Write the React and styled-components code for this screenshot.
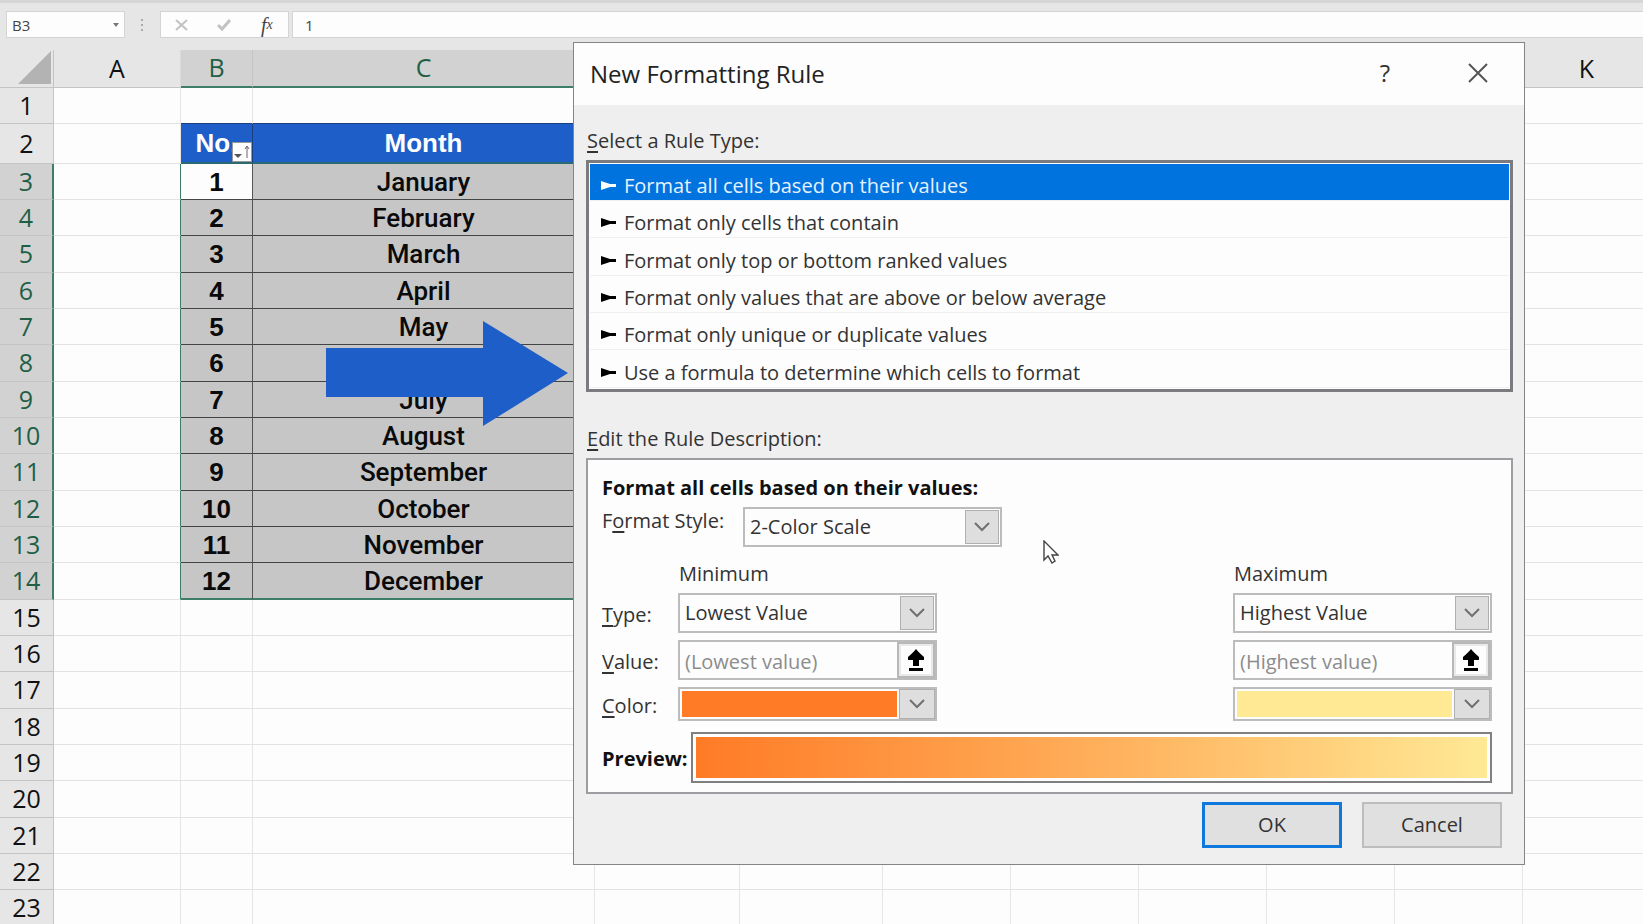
import React, { useState } from 'react'
import styled, { createGlobalStyle, css } from 'styled-components'

// D to J sit behind the dialog, so their letters are left out
const columns = [
  { name: 'A', width: 127 },
  { name: 'B', width: 72 },
  { name: 'C', width: 342 },
  { name: 'D', width: 145, covered: true },
  { name: 'E', width: 143, covered: true },
  { name: 'F', width: 128, covered: true },
  { name: 'G', width: 128, covered: true },
  { name: 'H', width: 128, covered: true },
  { name: 'I', width: 128, covered: true },
  { name: 'J', width: 128, covered: true },
  { name: 'K', width: 128 },
]

const months = [
  'January', 'February', 'March', 'April', 'May', 'June',
  'July', 'August', 'September', 'October', 'November', 'December',
]

const rules = [
  'Format all cells based on their values',
  'Format only cells that contain',
  'Format only top or bottom ranked values',
  'Format only values that are above or below average',
  'Format only unique or duplicate values',
  'Use a formula to determine which cells to format',
]

const rows = Array.from({ length: 23 }, (_, i) => i + 1)
const inRange = (row) => row >= 3 && row <= 14

const Chevron = () => (
  <svg width="16" height="10" viewBox="0 0 16 10" fill="none" stroke="#707070" strokeWidth="2">
    <path d="M1 1l7 7 7-7" />
  </svg>
)

const Bullet = () => (
  <svg width="15" height="10" viewBox="0 0 15 10" fill="currentColor">
    <path d="M0 0l9 3h6v3H9L0 9z" />
  </svg>
)

const Picker = ({ id, label, value }) => (
  <SelectBox>
    <select id={id} aria-label={label} defaultValue={value}>
      <option>{value}</option>
    </select>
    <Drop><Chevron /></Drop>
  </SelectBox>
)

const ValueField = ({ id, label, hint }) => (
  <FieldBox>
    <input id={id} aria-label={label} placeholder={hint} />
    <RefButton type="button" aria-label="Pick a cell">
      <svg width="16" height="23" viewBox="0 0 16 23">
        <path d="M8 0C6 3 3 5 0 8v3h5v6h6v-6h5V8C13 5 10 3 8 0z" />
        <rect x="1" y="19" width="14" height="3" />
      </svg>
    </RefButton>
  </FieldBox>
)

const ColorField = ({ id, label, color }) => (
  <ColorButton id={id} type="button" aria-label={label}>
    <Swatch $color={color} />
    <ColorDrop><Chevron /></ColorDrop>
  </ColorButton>
)

const FormulaBar = () => (
  <Bar>
    <NameBox>
      <input aria-label="Name box" defaultValue="B3" />
      <svg width="6" height="4" viewBox="0 0 6 4" fill="#777"><path d="M0 0h6L3 4z" /></svg>
    </NameBox>
    <Dots><i /><i /><i /></Dots>
    <Tools>
      <ToolButton aria-label="Cancel entry">
        <svg width="14" height="14" viewBox="0 0 14 14" fill="none" stroke="#c2c2c2" strokeWidth="2">
          <path d="M1 2l11 10M12 2L1 12" />
        </svg>
      </ToolButton>
      <ToolButton aria-label="Enter">
        <svg width="14" height="14" viewBox="0 0 14 14" fill="none" stroke="#c2c2c2" strokeWidth="3">
          <path d="M1 7l4 4 8-9" />
        </svg>
      </ToolButton>
      <ToolButton aria-label="Insert function"><em>f</em><sub>x</sub></ToolButton>
    </Tools>
    <Formula aria-label="Formula" defaultValue="1" />
  </Bar>
)

const Cell = ({ row, name }) => {
  const inTable = name === 'B' || name === 'C'

  if (row === 2 && name === 'B') {
    return <Heading>No.
      <FilterButton aria-label="Filter">
        <svg width="18" height="18" viewBox="0 0 18 18" fill="none" stroke="#666" strokeWidth="1">
          <path d="M1 11h8l-4 4z" fill="#555" stroke="none" />
          <path d="M14 15V4M12 6l2-3 2 3" />
        </svg>
      </FilterButton>
    </Heading>
  }
  if (row === 2 && name === 'C') return <Heading>Month</Heading>
  if (inTable && inRange(row)) {
    return <DataCell $bold={name === 'B'} $active={row === 3 && name === 'B'} $last={row === 14}>
      {name === 'B' ? row - 2 : months[row - 3]}
    </DataCell>
  }
  return <Blank
    $edge={name === 'A' && inRange(row)}
    $dark={row === 1 && inTable}
  />
}

const Sheet = () => (
  <Table>
    <colgroup>
      <Col $width={54} />
      {columns.map((c) => <Col key={c.name} $width={c.width} />)}
    </colgroup>
    <thead>
      <tr>
        <Corner><svg width="33" height="33" viewBox="0 0 33 33" fill="#b3b3b3"><path d="M33 0v33H0z" /></svg></Corner>
        {columns.map((c) => (
          <ColHead key={c.name} $on={c.name === 'B' || c.name === 'C'}>{c.covered ? null : c.name}</ColHead>
        ))}
      </tr>
    </thead>
    <tbody>
      {rows.map((row) => (
        <Row key={row}>
          <RowHead $on={inRange(row)}>{row}</RowHead>
          {columns.map((c) => <Cell key={c.name} row={row} name={c.name} />)}
        </Row>
      ))}
    </tbody>
  </Table>
)

const RuleDialog = () => {
  const [selected, setSelected] = useState(0)

  return <Dialog role="dialog" aria-labelledby="dialog-title">
    <TitleBar>
      <h1 id="dialog-title">New Formatting Rule</h1>
      <TitleButton aria-label="Help">?</TitleButton>
      <TitleButton aria-label="Close">
        <svg width="20" height="20" viewBox="0 0 20 20" fill="none" stroke="#555" strokeWidth="2">
          <path d="M1 1l18 18M19 1L1 19" />
        </svg>
      </TitleButton>
    </TitleBar>
    <Body>
      <SectionTitle><u>S</u>elect a Rule Type:</SectionTitle>
      <RuleList>
        {rules.map((rule, i) => (
          <li key={rule}>
            <RuleButton type="button" $on={i === selected} $tall={i % 3 === 2} onClick={() => setSelected(i)}>
              <Bullet />
              {rule}
            </RuleButton>
          </li>
        ))}
      </RuleList>
      <SectionTitle $second><u>E</u>dit the Rule Description:</SectionTitle>
      <Panel>
        <h2>Format all cells based on their values:</h2>
        <StyleRow>
          <label htmlFor="style">F<u>o</u>rmat Style:</label>
          <Picker id="style" value="2-Color Scale" />
        </StyleRow>
        <Fields>
          <Head $col={2}>Minimum</Head>
          <Head $col={4}>Maximum</Head>
          <Label htmlFor="type"><u>T</u>ype:</Label>
          <Picker id="type" value="Lowest Value" />
          <span />
          <Picker label="Maximum type" value="Highest Value" />
          <Label htmlFor="value"><u>V</u>alue:</Label>
          <ValueField id="value" hint="(Lowest value)" />
          <span />
          <ValueField label="Maximum value" hint="(Highest value)" />
          <Label htmlFor="color"><u>C</u>olor:</Label>
          <ColorField id="color" color="#ff7b26" />
          <span />
          <ColorField label="Maximum color" color="#ffe995" />
        </Fields>
        <PreviewRow>
          <strong>Preview:</strong>
          <Preview><div /></Preview>
        </PreviewRow>
      </Panel>
      <Actions>
        <ActionButton $primary>OK</ActionButton>
        <ActionButton>Cancel</ActionButton>
      </Actions>
    </Body>
    <Cursor width="16" height="25" viewBox="0 0 16 25" fill="#fff" stroke="#444" strokeWidth="1.4">
      <path d="M1 1v19l4-4 4 7 3-2-3-6h6z" />
    </Cursor>
  </Dialog>
}

const App = () => {
  return <Page>
    <GlobalStyle />
    <FormulaBar />
    <Sheet />
    <Arrow width="242" height="105" viewBox="0 0 242 105" fill="#1d5ec9">
      <path d="M0 27h157V0l85 52-85 53V76H0z" />
    </Arrow>
    <RuleDialog />
  </Page>
}

const GlobalStyle = createGlobalStyle`
* {
  box-sizing: border-box;
}
body {
  margin: 0;
  background: #fdfdfd;
  font-family: 'Open Sans', 'Noto Sans', sans-serif;
}
button, input, select {
  font: inherit;
  color: inherit;
  border: none;
  border-radius: 0;
  padding: 0;
  margin: 0;
  background: none;
}
u {
  text-decoration-thickness: 2px;
  text-underline-offset: 3px;
}
`

const Page = styled.main`
position: relative;
height: 100vh;
overflow: hidden;
`

/* formula bar */
const Bar = styled.div`
display: flex;
height: 50px;
padding: 8px 0 12px 6px;
border-top: 3px solid #d6d6d6;
background: #e6e6e6;
font-size: 15px;
color: #444;
`

const boxed = css`
background: #fdfdfd;
border: 1px solid #d4d4d4;
`

const NameBox = styled.div`
${boxed}
display: flex;
align-items: center;
width: 119px;
padding: 0 5px;

input {
  flex: 1;
  min-width: 0;
  line-height: 20px;
}
`

const Dots = styled.span`
display: flex;
flex-direction: column;
justify-content: center;
gap: 3px;
width: 35px;
padding-left: 16px;

i {
  width: 2px;
  height: 2px;
  background: #aaa;
}
`

const Tools = styled.div`
${boxed}
display: flex;
width: 129px;
margin-right: 3px;
`

const ToolButton = styled.button`
flex: 1;
display: flex;
align-items: center;
justify-content: center;
font-family: 'Liberation Serif', serif;
font-size: 20px;
line-height: 20px;

sub {
  font-size: 14px;
  font-style: italic;
  line-height: 10px;
}
`

const Formula = styled.input`
&& {
  ${boxed}
  flex: 1;
  min-width: 0;
  border-right: none;
  padding: 0 12px;
}
`

/* sheet */
const Table = styled.table`
table-layout: fixed;
width: 1651px;
border-collapse: separate;
border-spacing: 0;
font-size: 25px;
line-height: 32px;
text-align: center;

th {
  padding: 0 0 2px;
}
td {
  padding: 0;
}
`

const Col = styled.col`
width: ${(p) => p.$width}px;
`

const Row = styled.tr`
height: 36px;

&:nth-child(3n + 2) {
  height: 37px;
}
&:nth-child(2) {
  height: 40px;
}
`

const Corner = styled.th`
height: 38px;
background: #e6e6e6;
border-right: 1px solid #c4c4c4;
border-bottom: 1px solid #c4c4c4;

svg {
  display: block;
  margin-left: 18px;
}
`

const ColHead = styled.th`
font-weight: 400;
color: ${(p) => (p.$on ? '#1f5f46' : '#111')};
background: ${(p) => (p.$on ? '#d2d2d2' : '#e6e6e6')};
border-right: 1px solid ${(p) => (p.$on ? '#c4c4c4' : '#dadada')};
border-bottom: ${(p) => (p.$on ? '2px solid #3d7f66' : '1px solid #c4c4c4')};
`

const RowHead = styled.th`
font-weight: 400;
color: ${(p) => (p.$on ? '#1f5f46' : '#111')};
background: ${(p) => (p.$on ? '#d2d2d2' : '#e6e6e6')};
border-bottom: 1px solid #c4c4c4;
border-right: ${(p) => (p.$on ? '2px solid #3d7f66' : '1px solid #c4c4c4')};
`

const Blank = styled.td`
border-right: 1px solid ${(p) => (p.$edge ? '#3d7f66' : '#e6e6e6')};
border-bottom: 1px solid ${(p) => (p.$dark ? '#1c3f80' : '#e3e3e3')};
`

const tableFont = css`
font-family: 'Liberation Sans', Arial, sans-serif;
font-weight: 700;
font-size: 26px;
`

const Heading = styled.td`
${tableFont}
position: relative;
color: #fff;
background: #1d5ec9;
border-right: 1px solid #1c3f80;
border-bottom: 2px solid #2b6a70;
`

const FilterButton = styled.button`
position: absolute;
right: 0;
bottom: 0;
width: 20px;
height: 20px;
background: #fdfdfd;
border: 1px solid #999;

svg {
  display: block;
}
`

const DataCell = styled.td`
${tableFont}
${(p) => !p.$bold && css`
  font-family: Roboto, 'Liberation Sans', sans-serif;
  font-weight: 500;
`}
color: #0a0a0a;
background: ${(p) => (p.$active ? '#fdfdfd' : '#c6c6c6')};
border-right: 1px solid #555;
border-bottom: ${(p) => (p.$last ? '2px solid #3d7f66' : '1px solid #444')};
`

const Arrow = styled.svg`
position: absolute;
left: 326px;
top: 321px;
`

/* dialog */
const Dialog = styled.section`
position: absolute;
left: 573px;
top: 42px;
width: 952px;
border: 1px solid #858585;
background: #efefef;
font-size: 20px;
line-height: 28px;
color: #333;
`

const TitleBar = styled.header`
display: flex;
align-items: center;
gap: 53px;
height: 62px;
padding: 0 34px 2px 16px;
background: #fdfdfd;

h1 {
  flex: 1;
  margin: 0;
  font-size: 24px;
  line-height: 32px;
  padding-top: 2px;
  font-weight: 400;
  color: #222;
}
`

const TitleButton = styled.button`
display: flex;
justify-content: center;
width: 24px;
font-size: 24px;
margin-left: 16px;
`

const Body = styled.div`
padding: 22px 11px 16px 12px;
`

const SectionTitle = styled.div`
margin-top: ${(p) => (p.$second ? 33 : 0)}px;
padding: 0 1px 5px;
`

const RuleList = styled.ul`
margin: 0;
padding: 1px;
list-style: none;
background: #fdfdfd;
border: 3px solid #7b7b7f;
`

const RuleButton = styled.button`
display: flex;
align-items: center;
gap: 8px;
width: 100%;
height: ${(p) => (p.$tall ? 38 : 37)}px;
padding: 8px 11px 0;
border-bottom: 1px solid #f0f0f0;
text-align: left;

${(p) => p.$on && css`
  && {
    color: #e6f2ff;
    background: #0073df;
  }
`}

svg {
  color: ${(p) => (p.$on ? '#fff' : '#000')};
}
`

const Panel = styled.div`
padding: 14px 19px 9px 14px;
background: #fdfdfd;
border: 2px solid #9d9da1;

h2 {
  margin: 0 0 5px;
  font-size: 20px;
  font-weight: 700;
  color: #111;
}
strong {
  padding-top: 2px;
  color: #111;
}
`

const StyleRow = styled.div`
display: grid;
grid-template-columns: 141px 259px;
`

const Fields = styled.div`
display: grid;
grid-template-columns: 76px 259px 1fr 259px;
gap: 7px 0;
margin-top: 14px;
`

const Head = styled.div`
grid-column: ${(p) => p.$col};
padding-left: 1px;
line-height: 25px;
`

const Label = styled.label`
align-self: center;
padding-top: 4px;
`

const SelectBox = styled.div`
position: relative;
height: 40px;
border: 2px solid #bcbcbc;

select {
  appearance: none;
  width: 100%;
  height: 100%;
  padding: 0 40px 0 5px;
}
`

const Drop = styled.span`
position: absolute;
top: 1px;
right: 1px;
bottom: 1px;
width: 34px;
display: flex;
align-items: center;
justify-content: center;
background: #dedede;
border: 1px solid #b0b0b0;
pointer-events: none;
`

const FieldBox = styled.div`
display: flex;
height: 40px;
border: 2px solid #bcbcbc;

input {
  flex: 1;
  min-width: 0;
  padding: 4px 5px 0;
}
input::placeholder {
  color: #8c8c8c;
  opacity: 1;
}
`

const RefButton = styled.button`
display: flex;
align-items: center;
justify-content: center;
width: 38px;
background: #fdfdfd;
box-shadow: inset 0 0 0 2px #b8b8b8, inset 0 0 0 4px #e9e9e9;
`

const ColorButton = styled.button`
&& {
  display: flex;
  height: 34px;
  border: 2px solid #bcbcbc;
}
`

const Swatch = styled.span`
flex: 1;
margin: 2px;
align-self: stretch;
background: ${(p) => p.$color};
`

const ColorDrop = styled.span`
display: flex;
align-items: center;
justify-content: center;
align-self: stretch;
width: 36px;
background: #dedede;
border: 1px solid #b0b0b0;
`

const PreviewRow = styled.div`
display: grid;
grid-template-columns: 89px 1fr;
align-items: center;
margin-top: 11px;
`

const Preview = styled.div`
height: 51px;
padding: 3px;
border: 2px solid #808080;

div {
  height: 100%;
  background: linear-gradient(90deg, #ff7b26, #ffb05c 52%, #ffe995);
}
`

const Actions = styled.div`
display: flex;
justify-content: flex-end;
gap: 20px;
padding: 8px 11px 0;
`

const ActionButton = styled.button`
&& {
  width: 140px;
  height: 46px;
  background: #e0e0e0;
  border: ${(p) => (p.$primary ? '3px solid #0f78dc' : '2px solid #bdbdbd')};
}
`

const Cursor = styled.svg`
position: absolute;
left: 469px;
top: 497px;
`

export default App
